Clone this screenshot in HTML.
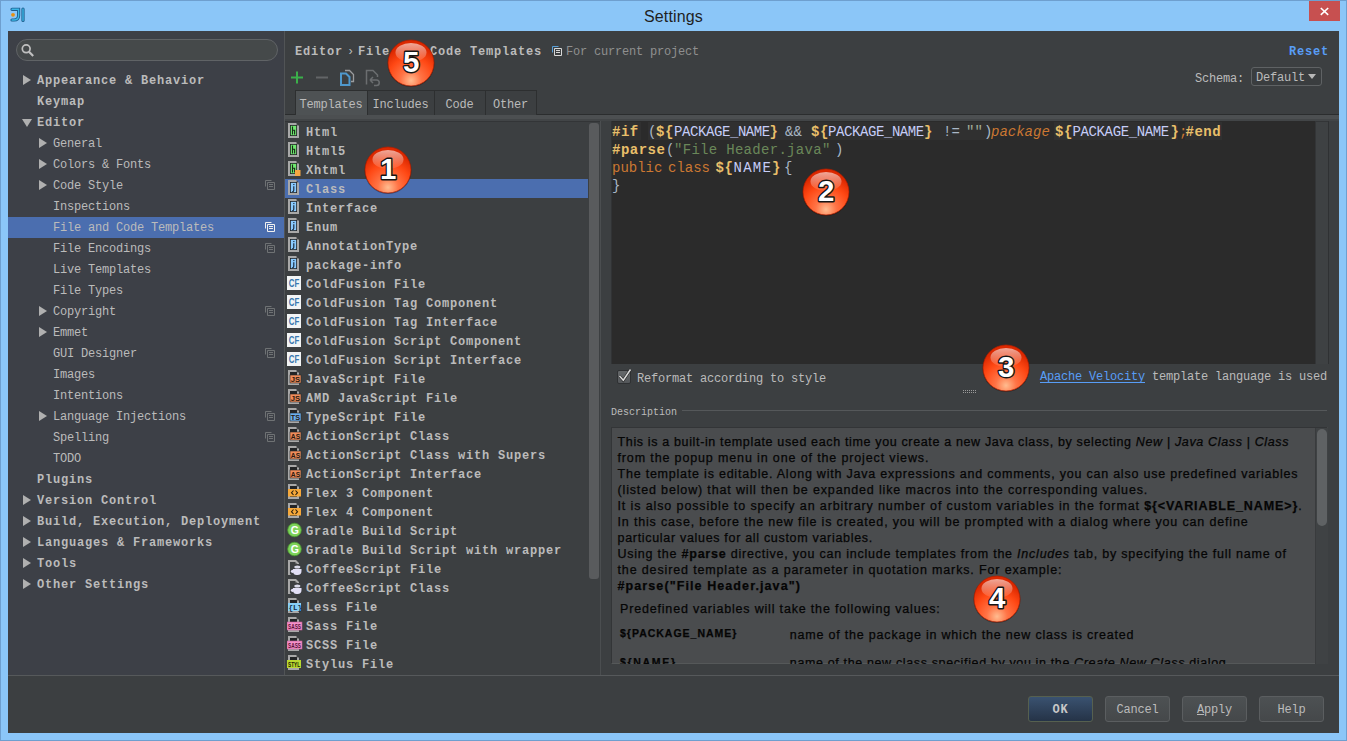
<!DOCTYPE html><html><head><meta charset="utf-8"><style>
*{margin:0;padding:0;box-sizing:border-box}
html,body{width:1347px;height:741px;overflow:hidden}
body{position:relative;background:#8bc6f8;color:#bbbbbb}
.a{position:absolute}
.mb{position:absolute;font-family:'Liberation Mono',monospace;font-weight:bold;font-size:12px;letter-spacing:0.8px;white-space:nowrap;line-height:16px}
.mr{position:absolute;font-family:'Liberation Mono',monospace;font-size:12px;letter-spacing:-0.2px;white-space:nowrap;line-height:16px}
.tri{position:absolute;width:0;height:0;border-top:5px solid transparent;border-bottom:5px solid transparent;border-left:8px solid #b0b0b0}
.trid{position:absolute;width:0;height:0;border-left:5px solid transparent;border-right:5px solid transparent;border-top:8px solid #b0b0b0}
.ds{position:absolute;font-family:'Liberation Sans',sans-serif;font-size:12.5px;line-height:16px;color:#050505;white-space:nowrap;-webkit-text-stroke:0.25px #050505}
.cd{position:absolute;font-family:'Liberation Mono',monospace;font-size:14px;line-height:18px;white-space:pre}
</style></head><body>
<div class="a" style="left:0;top:0;width:1347px;height:741px;border:1px solid #6e9fcf"></div>
<div class="a" style="left:0;top:6.5px;width:1347px;text-align:center;font-family:'Liberation Sans',sans-serif;font-size:16px;line-height:20px;color:#1f1f1f;padding-left:0px;letter-spacing:0.15px">Settings</div>
<div class="a" style="left:1309px;top:1px;width:31px;height:20px;background:#c75050"></div>
<svg class="a" style="left:1309px;top:1px" width="31" height="20"><path d="M11.8 7 L19.2 13.8 M19.2 7 L11.8 13.8" stroke="#fff" stroke-width="1.6"/></svg>
<svg class="a" style="left:8px;top:6px" width="20" height="18"><path d="M4 3.3 H10.6 V9.5 Q10.6 14 6 14 H4" fill="none" stroke="#1d5c8c" stroke-width="3.2" stroke-linecap="round"/><path d="M4 3.3 H10.6 V9.5 Q10.6 14 6 14 H4" fill="none" stroke="#3ab6e6" stroke-width="1.4" stroke-linecap="round"/><path d="M15 3 V14.5" fill="none" stroke="#1d5c8c" stroke-width="3.2" stroke-linecap="round"/><path d="M15 3 V14.5" fill="none" stroke="#3ab6e6" stroke-width="1.4" stroke-linecap="round"/><circle cx="5" cy="8.8" r="1.9" fill="#e89010"/></svg>
<div class="a" style="left:8px;top:31px;width:1331px;height:702px;background:#3c3f41"></div>
<div class="a" style="left:8px;top:31px;width:276px;height:644px;background:#3d4047"></div>
<div class="a" style="left:284px;top:31px;width:1px;height:644px;background:#515456"></div>
<div class="a" style="left:8px;top:675px;width:1331px;height:1px;background:#56595b"></div>
<div class="a" style="left:16px;top:39px;width:262px;height:22px;border-radius:11px;background:#45494a;border:1px solid #606366"></div>
<svg class="a" style="left:16px;top:39px" width="22" height="22"><circle cx="10.2" cy="9.8" r="3.9" fill="none" stroke="#c0c0c0" stroke-width="1.7"/><path d="M13 12.8 L17.2 17" stroke="#c0c0c0" stroke-width="2.2"/></svg>
<div class="mb" style="left:37px;top:73px">Appearance &amp; Behavior</div>
<div class="tri" style="left:23px;top:75px"></div>
<div class="mb" style="left:37px;top:94px">Keymap</div>
<div class="mb" style="left:37px;top:115px">Editor</div>
<div class="trid" style="left:22px;top:119px"></div>
<div class="mr" style="left:53px;top:136px">General</div>
<div class="tri" style="left:39px;top:138px"></div>
<div class="mr" style="left:53px;top:157px">Colors &amp; Fonts</div>
<div class="tri" style="left:39px;top:159px"></div>
<div class="mr" style="left:53px;top:178px">Code Style</div>
<div class="tri" style="left:39px;top:180px"></div>
<svg class="a" style="left:265px;top:180px" width="10" height="10"><path d="M0.5 6.5 V0.5 H6.5" fill="none" stroke="#6f7274" stroke-width="1"/><path d="M2.5 2.5 H9.5 V9.5 H2.5 Z" fill="none" stroke="#6f7274" stroke-width="1"/><path d="M4 4.5 H8 M4 6.5 H8" stroke="#6f7274" stroke-width="1"/></svg>
<div class="mr" style="left:53px;top:199px">Inspections</div>
<div class="a" style="left:8px;top:217px;width:276px;height:21px;background:#4b6eaf"></div>
<div class="mr" style="left:53px;top:220px">File and Code Templates</div>
<svg class="a" style="left:265px;top:222px" width="10" height="10"><path d="M0.5 6.5 V0.5 H6.5" fill="none" stroke="#f0f0f0" stroke-width="1"/><path d="M2.5 2.5 H9.5 V9.5 H2.5 Z" fill="none" stroke="#f0f0f0" stroke-width="1"/><path d="M4 4.5 H8 M4 6.5 H8" stroke="#f0f0f0" stroke-width="1"/></svg>
<div class="mr" style="left:53px;top:241px">File Encodings</div>
<svg class="a" style="left:265px;top:243px" width="10" height="10"><path d="M0.5 6.5 V0.5 H6.5" fill="none" stroke="#6f7274" stroke-width="1"/><path d="M2.5 2.5 H9.5 V9.5 H2.5 Z" fill="none" stroke="#6f7274" stroke-width="1"/><path d="M4 4.5 H8 M4 6.5 H8" stroke="#6f7274" stroke-width="1"/></svg>
<div class="mr" style="left:53px;top:262px">Live Templates</div>
<div class="mr" style="left:53px;top:283px">File Types</div>
<div class="mr" style="left:53px;top:304px">Copyright</div>
<div class="tri" style="left:39px;top:306px"></div>
<svg class="a" style="left:265px;top:306px" width="10" height="10"><path d="M0.5 6.5 V0.5 H6.5" fill="none" stroke="#6f7274" stroke-width="1"/><path d="M2.5 2.5 H9.5 V9.5 H2.5 Z" fill="none" stroke="#6f7274" stroke-width="1"/><path d="M4 4.5 H8 M4 6.5 H8" stroke="#6f7274" stroke-width="1"/></svg>
<div class="mr" style="left:53px;top:325px">Emmet</div>
<div class="tri" style="left:39px;top:327px"></div>
<div class="mr" style="left:53px;top:346px">GUI Designer</div>
<svg class="a" style="left:265px;top:348px" width="10" height="10"><path d="M0.5 6.5 V0.5 H6.5" fill="none" stroke="#6f7274" stroke-width="1"/><path d="M2.5 2.5 H9.5 V9.5 H2.5 Z" fill="none" stroke="#6f7274" stroke-width="1"/><path d="M4 4.5 H8 M4 6.5 H8" stroke="#6f7274" stroke-width="1"/></svg>
<div class="mr" style="left:53px;top:367px">Images</div>
<div class="mr" style="left:53px;top:388px">Intentions</div>
<div class="mr" style="left:53px;top:409px">Language Injections</div>
<div class="tri" style="left:39px;top:411px"></div>
<svg class="a" style="left:265px;top:411px" width="10" height="10"><path d="M0.5 6.5 V0.5 H6.5" fill="none" stroke="#6f7274" stroke-width="1"/><path d="M2.5 2.5 H9.5 V9.5 H2.5 Z" fill="none" stroke="#6f7274" stroke-width="1"/><path d="M4 4.5 H8 M4 6.5 H8" stroke="#6f7274" stroke-width="1"/></svg>
<div class="mr" style="left:53px;top:430px">Spelling</div>
<svg class="a" style="left:265px;top:432px" width="10" height="10"><path d="M0.5 6.5 V0.5 H6.5" fill="none" stroke="#6f7274" stroke-width="1"/><path d="M2.5 2.5 H9.5 V9.5 H2.5 Z" fill="none" stroke="#6f7274" stroke-width="1"/><path d="M4 4.5 H8 M4 6.5 H8" stroke="#6f7274" stroke-width="1"/></svg>
<div class="mr" style="left:53px;top:451px">TODO</div>
<div class="mb" style="left:37px;top:472px">Plugins</div>
<div class="mb" style="left:37px;top:493px">Version Control</div>
<div class="tri" style="left:23px;top:495px"></div>
<div class="mb" style="left:37px;top:514px">Build, Execution, Deployment</div>
<div class="tri" style="left:23px;top:516px"></div>
<div class="mb" style="left:37px;top:535px">Languages &amp; Frameworks</div>
<div class="tri" style="left:23px;top:537px"></div>
<div class="mb" style="left:37px;top:556px">Tools</div>
<div class="tri" style="left:23px;top:558px"></div>
<div class="mb" style="left:37px;top:577px">Other Settings</div>
<div class="tri" style="left:23px;top:579px"></div>
<div class="mb" style="left:295px;top:44px">Editor</div>
<div class="mr" style="left:347px;top:44px">›</div>
<div class="mb" style="left:358px;top:44px">File and Code Templates</div>
<svg class="a" style="left:552px;top:46px" width="10" height="10"><path d="M0.5 6.5 V0.5 H6.5" fill="none" stroke="#5aa0d8" stroke-width="1"/><path d="M2.5 2.5 H9.5 V9.5 H2.5 Z" fill="none" stroke="#d8d8d8" stroke-width="1"/><path d="M4 4.5 H8 M4 6.5 H8" stroke="#d8d8d8" stroke-width="1"/></svg>
<div class="mr" style="left:566px;top:44px;color:#8f8f8f">For current project</div>
<div class="mb" style="left:1289px;top:44px;color:#589df6">Reset</div>
<svg class="a" style="left:285px;top:66px" width="100" height="22"><path d="M12 5.5 V17.5 M6 11.5 H18" stroke="#3bb04a" stroke-width="2"/><path d="M31 11.5 H43" stroke="#626567" stroke-width="2"/><path d="M60 4.5 H64.5 L68.5 8.5 V15.5 H66" fill="none" stroke="#9a9c9e" stroke-width="1.3"/><path d="M56 7.5 H61 L64.5 11 V19 H56 Z" fill="none" stroke="#4f98cc" stroke-width="2"/><path d="M81.5 18.5 V4.5 H88 L92.5 9 V11" fill="none" stroke="#6b6e70" stroke-width="1.5"/><path d="M85 14 L88 11 M85 14 L88 17 M85.5 14 H91.5 A2.7 2.7 0 0 1 91.5 19.5 H89" fill="none" stroke="#6b6e70" stroke-width="1.5"/></svg>
<div class="mr" style="left:1195px;top:71px">Schema:</div>
<div class="a" style="left:1251px;top:67px;width:71px;height:19px;border:1px solid #5f6264;border-radius:3px;background:#3a3d3f"></div>
<div class="mr" style="left:1256px;top:70px">Default</div>
<div class="a" style="left:1308px;top:74px;width:0;height:0;border-left:4.5px solid transparent;border-right:4.5px solid transparent;border-top:5.5px solid #b8b8b8"></div>
<div class="a" style="left:285px;top:114px;width:1054px;height:1px;background:#2b2d2e"></div>
<div class="a" style="left:285px;top:115px;width:1054px;height:4px;background:#4c4f51"></div>
<div class="a" style="left:285px;top:119px;width:1054px;height:2px;background:#424547"></div>
<div class="a" style="left:295px;top:90px;width:73px;height:25px;background:#4e5254;border:1px solid #2d2f30;border-bottom:none"></div>
<div class="mr" style="left:295px;width:72px;text-align:center;top:97px">Templates</div>
<div class="a" style="left:367px;top:90px;width:68px;height:25px;background:#3c3f41;border:1px solid #2d2f30;border-bottom:none"></div>
<div class="mr" style="left:367px;width:67px;text-align:center;top:97px">Includes</div>
<div class="a" style="left:434px;top:90px;width:52px;height:25px;background:#3c3f41;border:1px solid #2d2f30;border-bottom:none"></div>
<div class="mr" style="left:434px;width:51px;text-align:center;top:97px">Code</div>
<div class="a" style="left:485px;top:90px;width:52px;height:25px;background:#3c3f41;border:1px solid #2d2f30;border-bottom:none"></div>
<div class="mr" style="left:485px;width:51px;text-align:center;top:97px">Other</div>
<div class="a" style="left:296px;top:114px;width:71px;height:1px;background:#4e5254"></div>
<div class="a" style="left:285px;top:121px;width:315px;height:554px;background:#3c3f41"></div>
<div class="a" style="left:600px;top:121px;width:1px;height:554px;background:#4b4e50"></div>
<div class="a" style="left:285px;top:121px;width:315px;height:1px;background:#333537"></div>
<div class="a" style="left:589px;top:123px;width:10px;height:456px;border-radius:3px;background:#595b5d"></div>
<svg class="a" style="left:287px;top:122px" width="17" height="18"><path d="M1 1 H9 L12 4 V16 H1 Z" fill="#a8a8a8"/><rect x="3" y="3" width="7" height="11" fill="#222426"/><rect x="9.6" y="2.2" width="1.2" height="1.2" fill="#333"/><rect x="3.8" y="3.8" width="5.4" height="9.4" fill="#6fe86f"/><path d="M5.5 4.6 V12.6 M5.5 8.3 H7.6 V12.6" fill="none" stroke="#1a2a1a" stroke-width="1.1"/></svg>
<div class="mb" style="left:306px;top:125px">Html</div>
<svg class="a" style="left:287px;top:141px" width="17" height="18"><path d="M1 1 H9 L12 4 V16 H1 Z" fill="#a8a8a8"/><rect x="3" y="3" width="7" height="11" fill="#222426"/><rect x="9.6" y="2.2" width="1.2" height="1.2" fill="#333"/><rect x="3.8" y="3.8" width="5.4" height="9.4" fill="#6fe86f"/><path d="M5.5 4.6 V12.6 M5.5 8.3 H7.6 V12.6" fill="none" stroke="#1a2a1a" stroke-width="1.1"/></svg>
<div class="mb" style="left:306px;top:144px">Html5</div>
<svg class="a" style="left:287px;top:160px" width="17" height="18"><path d="M1 1 H9 L12 4 V16 H1 Z" fill="#a8a8a8"/><rect x="3" y="3" width="7" height="11" fill="#222426"/><rect x="9.6" y="2.2" width="1.2" height="1.2" fill="#333"/><rect x="3.8" y="3.8" width="5.4" height="9.4" fill="#6fe86f"/><path d="M5.5 4.6 V12.6 M5.5 8.3 H7.6 V12.6" fill="none" stroke="#1a2a1a" stroke-width="1.1"/><rect x="8" y="10" width="5.5" height="6" fill="#f5a742"/></svg>
<div class="mb" style="left:306px;top:163px">Xhtml</div>
<div class="a" style="left:285px;top:179px;width:303px;height:19px;background:#4b6eaf"></div>
<svg class="a" style="left:287px;top:179px" width="17" height="18"><path d="M1 1 H9 L12 4 V16 H1 Z" fill="#a8a8a8"/><rect x="3" y="3" width="7" height="11" fill="#222426"/><rect x="9.6" y="2.2" width="1.2" height="1.2" fill="#333"/><rect x="3.8" y="3.8" width="5.4" height="9.4" fill="#8acbff"/><path d="M6.8 7.3 V11.3 Q6.8 12.7 5.2 12.7" fill="none" stroke="#142030" stroke-width="1.1"/><rect x="6.3" y="5" width="1.1" height="1.1" fill="#142030"/></svg>
<div class="mb" style="left:306px;top:182px">Class</div>
<svg class="a" style="left:287px;top:198px" width="17" height="18"><path d="M1 1 H9 L12 4 V16 H1 Z" fill="#a8a8a8"/><rect x="3" y="3" width="7" height="11" fill="#222426"/><rect x="9.6" y="2.2" width="1.2" height="1.2" fill="#333"/><rect x="3.8" y="3.8" width="5.4" height="9.4" fill="#8acbff"/><path d="M6.8 7.3 V11.3 Q6.8 12.7 5.2 12.7" fill="none" stroke="#142030" stroke-width="1.1"/><rect x="6.3" y="5" width="1.1" height="1.1" fill="#142030"/></svg>
<div class="mb" style="left:306px;top:201px">Interface</div>
<svg class="a" style="left:287px;top:217px" width="17" height="18"><path d="M1 1 H9 L12 4 V16 H1 Z" fill="#a8a8a8"/><rect x="3" y="3" width="7" height="11" fill="#222426"/><rect x="9.6" y="2.2" width="1.2" height="1.2" fill="#333"/><rect x="3.8" y="3.8" width="5.4" height="9.4" fill="#8acbff"/><path d="M6.8 7.3 V11.3 Q6.8 12.7 5.2 12.7" fill="none" stroke="#142030" stroke-width="1.1"/><rect x="6.3" y="5" width="1.1" height="1.1" fill="#142030"/></svg>
<div class="mb" style="left:306px;top:220px">Enum</div>
<svg class="a" style="left:287px;top:236px" width="17" height="18"><path d="M1 1 H9 L12 4 V16 H1 Z" fill="#a8a8a8"/><rect x="3" y="3" width="7" height="11" fill="#222426"/><rect x="9.6" y="2.2" width="1.2" height="1.2" fill="#333"/><rect x="3.8" y="3.8" width="5.4" height="9.4" fill="#8acbff"/><path d="M6.8 7.3 V11.3 Q6.8 12.7 5.2 12.7" fill="none" stroke="#142030" stroke-width="1.1"/><rect x="6.3" y="5" width="1.1" height="1.1" fill="#142030"/></svg>
<div class="mb" style="left:306px;top:239px">AnnotationType</div>
<svg class="a" style="left:287px;top:255px" width="17" height="18"><path d="M1 1 H9 L12 4 V16 H1 Z" fill="#a8a8a8"/><rect x="3" y="3" width="7" height="11" fill="#222426"/><rect x="9.6" y="2.2" width="1.2" height="1.2" fill="#333"/><rect x="3.8" y="3.8" width="5.4" height="9.4" fill="#8acbff"/><path d="M6.8 7.3 V11.3 Q6.8 12.7 5.2 12.7" fill="none" stroke="#142030" stroke-width="1.1"/><rect x="6.3" y="5" width="1.1" height="1.1" fill="#142030"/></svg>
<div class="mb" style="left:306px;top:258px">package-info</div>
<svg class="a" style="left:287px;top:274px" width="17" height="18"><rect x="0" y="2" width="14" height="14" fill="#f2f4f5"/><text x="1.8" y="13" font-family="Liberation Sans" font-weight="bold" font-size="10.5" textLength="10.5" lengthAdjust="spacingAndGlyphs" fill="#3a78b0">CF</text></svg>
<div class="mb" style="left:306px;top:277px">ColdFusion File</div>
<svg class="a" style="left:287px;top:293px" width="17" height="18"><rect x="0" y="2" width="14" height="14" fill="#f2f4f5"/><text x="1.8" y="13" font-family="Liberation Sans" font-weight="bold" font-size="10.5" textLength="10.5" lengthAdjust="spacingAndGlyphs" fill="#3a78b0">CF</text></svg>
<div class="mb" style="left:306px;top:296px">ColdFusion Tag Component</div>
<svg class="a" style="left:287px;top:312px" width="17" height="18"><rect x="0" y="2" width="14" height="14" fill="#f2f4f5"/><text x="1.8" y="13" font-family="Liberation Sans" font-weight="bold" font-size="10.5" textLength="10.5" lengthAdjust="spacingAndGlyphs" fill="#3a78b0">CF</text></svg>
<div class="mb" style="left:306px;top:315px">ColdFusion Tag Interface</div>
<svg class="a" style="left:287px;top:331px" width="17" height="18"><rect x="0" y="2" width="14" height="14" fill="#f2f4f5"/><text x="1.8" y="13" font-family="Liberation Sans" font-weight="bold" font-size="10.5" textLength="10.5" lengthAdjust="spacingAndGlyphs" fill="#3a78b0">CF</text></svg>
<div class="mb" style="left:306px;top:334px">ColdFusion Script Component</div>
<svg class="a" style="left:287px;top:350px" width="17" height="18"><rect x="0" y="2" width="14" height="14" fill="#f2f4f5"/><text x="1.8" y="13" font-family="Liberation Sans" font-weight="bold" font-size="10.5" textLength="10.5" lengthAdjust="spacingAndGlyphs" fill="#3a78b0">CF</text></svg>
<div class="mb" style="left:306px;top:353px">ColdFusion Script Interface</div>
<svg class="a" style="left:287px;top:369px" width="17" height="18"><path d="M1 1 H9 L12 4 V16 H1 Z" fill="#a8a8a8"/><rect x="3" y="3" width="7" height="11" fill="#222426"/><rect x="9.6" y="2.2" width="1.2" height="1.2" fill="#333"/><rect x="3" y="6" width="11" height="8" fill="#f08c5a" stroke="#2a2a2a" stroke-width="0.6"/><text x="3.8" y="12.9" font-family="Liberation Sans" font-weight="bold" font-size="7.6" textLength="9.4" lengthAdjust="spacingAndGlyphs" fill="#2a1a10">JS</text></svg>
<div class="mb" style="left:306px;top:372px">JavaScript File</div>
<svg class="a" style="left:287px;top:388px" width="17" height="18"><path d="M1 1 H9 L12 4 V16 H1 Z" fill="#a8a8a8"/><rect x="3" y="3" width="7" height="11" fill="#222426"/><rect x="9.6" y="2.2" width="1.2" height="1.2" fill="#333"/><rect x="3" y="6" width="11" height="8" fill="#f08c5a" stroke="#2a2a2a" stroke-width="0.6"/><text x="3.8" y="12.9" font-family="Liberation Sans" font-weight="bold" font-size="7.6" textLength="9.4" lengthAdjust="spacingAndGlyphs" fill="#2a1a10">JS</text></svg>
<div class="mb" style="left:306px;top:391px">AMD JavaScript File</div>
<svg class="a" style="left:287px;top:407px" width="17" height="18"><path d="M1 1 H9 L12 4 V16 H1 Z" fill="#a8a8a8"/><rect x="3" y="3" width="7" height="11" fill="#222426"/><rect x="9.6" y="2.2" width="1.2" height="1.2" fill="#333"/><rect x="3" y="6" width="11" height="8" fill="#6ab0f0" stroke="#2a2a2a" stroke-width="0.6"/><text x="3.8" y="12.9" font-family="Liberation Sans" font-weight="bold" font-size="7.6" textLength="9.4" lengthAdjust="spacingAndGlyphs" fill="#2a1a10">TS</text></svg>
<div class="mb" style="left:306px;top:410px">TypeScript File</div>
<svg class="a" style="left:287px;top:426px" width="17" height="18"><path d="M1 1 H9 L12 4 V16 H1 Z" fill="#a8a8a8"/><rect x="3" y="3" width="7" height="11" fill="#222426"/><rect x="9.6" y="2.2" width="1.2" height="1.2" fill="#333"/><rect x="3" y="6" width="11" height="8" fill="#f08c5a" stroke="#2a2a2a" stroke-width="0.6"/><text x="3.8" y="12.9" font-family="Liberation Sans" font-weight="bold" font-size="7.6" textLength="9.4" lengthAdjust="spacingAndGlyphs" fill="#2a1a10">AS</text></svg>
<div class="mb" style="left:306px;top:429px">ActionScript Class</div>
<svg class="a" style="left:287px;top:445px" width="17" height="18"><path d="M1 1 H9 L12 4 V16 H1 Z" fill="#a8a8a8"/><rect x="3" y="3" width="7" height="11" fill="#222426"/><rect x="9.6" y="2.2" width="1.2" height="1.2" fill="#333"/><rect x="3" y="6" width="11" height="8" fill="#f08c5a" stroke="#2a2a2a" stroke-width="0.6"/><text x="3.8" y="12.9" font-family="Liberation Sans" font-weight="bold" font-size="7.6" textLength="9.4" lengthAdjust="spacingAndGlyphs" fill="#2a1a10">AS</text></svg>
<div class="mb" style="left:306px;top:448px">ActionScript Class with Supers</div>
<svg class="a" style="left:287px;top:464px" width="17" height="18"><path d="M1 1 H9 L12 4 V16 H1 Z" fill="#a8a8a8"/><rect x="3" y="3" width="7" height="11" fill="#222426"/><rect x="9.6" y="2.2" width="1.2" height="1.2" fill="#333"/><rect x="3" y="6" width="11" height="8" fill="#f08c5a" stroke="#2a2a2a" stroke-width="0.6"/><text x="3.8" y="12.9" font-family="Liberation Sans" font-weight="bold" font-size="7.6" textLength="9.4" lengthAdjust="spacingAndGlyphs" fill="#2a1a10">AS</text></svg>
<div class="mb" style="left:306px;top:467px">ActionScript Interface</div>
<svg class="a" style="left:287px;top:483px" width="17" height="18"><path d="M1 1 H9 L12 4 V16 H1 Z" fill="#a8a8a8"/><rect x="3" y="3" width="7" height="11" fill="#222426"/><rect x="9.6" y="2.2" width="1.2" height="1.2" fill="#333"/><rect x="1" y="6" width="13" height="7.5" fill="#f6a83a"/><path d="M6.5 7.5 L4.5 9.7 L6.5 12 M8.5 7.5 L10.5 9.7 L8.5 12" fill="none" stroke="#2a2010" stroke-width="1.1"/></svg>
<div class="mb" style="left:306px;top:486px">Flex 3 Component</div>
<svg class="a" style="left:287px;top:502px" width="17" height="18"><path d="M1 1 H9 L12 4 V16 H1 Z" fill="#a8a8a8"/><rect x="3" y="3" width="7" height="11" fill="#222426"/><rect x="9.6" y="2.2" width="1.2" height="1.2" fill="#333"/><rect x="1" y="6" width="13" height="7.5" fill="#f6a83a"/><path d="M6.5 7.5 L4.5 9.7 L6.5 12 M8.5 7.5 L10.5 9.7 L8.5 12" fill="none" stroke="#2a2010" stroke-width="1.1"/></svg>
<div class="mb" style="left:306px;top:505px">Flex 4 Component</div>
<svg class="a" style="left:287px;top:521px" width="17" height="18"><circle cx="7.5" cy="9" r="6.8" fill="#7ed35a" stroke="#4a9a30" stroke-width="0.8"/><text x="3.7" y="13" font-family="Liberation Sans" font-weight="bold" font-size="10.5" fill="#ffffff">G</text></svg>
<div class="mb" style="left:306px;top:524px">Gradle Build Script</div>
<svg class="a" style="left:287px;top:540px" width="17" height="18"><circle cx="7.5" cy="9" r="6.8" fill="#7ed35a" stroke="#4a9a30" stroke-width="0.8"/><text x="3.7" y="13" font-family="Liberation Sans" font-weight="bold" font-size="10.5" fill="#ffffff">G</text></svg>
<div class="mb" style="left:306px;top:543px">Gradle Build Script with wrapper</div>
<svg class="a" style="left:287px;top:559px" width="17" height="18"><path d="M1 1 H9 L12 4 V5 H10 V4.5 H8.5 V3 H3 V15 H1 Z" fill="#a8a8a8"/><path d="M3 15 H1 V16 H4 Z" fill="#a8a8a8"/><path d="M6 10 H14.5 V12 Q14.5 16 10.5 16 H9.5 Q6 16 6 12 Z" fill="#e2e0f6"/><circle cx="5.5" cy="12.3" r="1.6" fill="#e2e0f6"/><ellipse cx="10.3" cy="8" rx="3" ry="1.5" fill="#d8d8e8"/></svg>
<div class="mb" style="left:306px;top:562px">CoffeeScript File</div>
<svg class="a" style="left:287px;top:578px" width="17" height="18"><path d="M1 1 H9 L12 4 V5 H10 V4.5 H8.5 V3 H3 V15 H1 Z" fill="#a8a8a8"/><path d="M3 15 H1 V16 H4 Z" fill="#a8a8a8"/><path d="M6 10 H14.5 V12 Q14.5 16 10.5 16 H9.5 Q6 16 6 12 Z" fill="#e2e0f6"/><circle cx="5.5" cy="12.3" r="1.6" fill="#e2e0f6"/><ellipse cx="10.3" cy="8" rx="3" ry="1.5" fill="#d8d8e8"/></svg>
<div class="mb" style="left:306px;top:581px">CoffeeScript Class</div>
<svg class="a" style="left:287px;top:597px" width="17" height="18"><path d="M1 1 H9 L12 4 V16 H1 Z" fill="#a8a8a8"/><rect x="3" y="3" width="7" height="11" fill="#222426"/><rect x="9.6" y="2.2" width="1.2" height="1.2" fill="#333"/><rect x="1" y="6" width="13" height="8" fill="#88d0f8"/><text x="1.6" y="12.8" font-family="Liberation Mono" font-weight="bold" font-size="7.5" fill="#14304a">{L}</text></svg>
<div class="mb" style="left:306px;top:600px">Less File</div>
<svg class="a" style="left:287px;top:616px" width="17" height="18"><path d="M1 1 H9 L12 4 V16 H1 Z" fill="#a8a8a8"/><rect x="3" y="3" width="7" height="11" fill="#222426"/><rect x="9.6" y="2.2" width="1.2" height="1.2" fill="#333"/><rect x="0" y="6" width="15" height="8" fill="#f490c8" stroke="#c05a98" stroke-width="0.6"/><text x="1" y="12.6" font-family="Liberation Sans" font-weight="bold" font-size="6.8" textLength="13" lengthAdjust="spacingAndGlyphs" fill="#5a1038">SASS</text></svg>
<div class="mb" style="left:306px;top:619px">Sass File</div>
<svg class="a" style="left:287px;top:635px" width="17" height="18"><path d="M1 1 H9 L12 4 V16 H1 Z" fill="#a8a8a8"/><rect x="3" y="3" width="7" height="11" fill="#222426"/><rect x="9.6" y="2.2" width="1.2" height="1.2" fill="#333"/><rect x="0" y="6" width="15" height="8" fill="#f490c8" stroke="#c05a98" stroke-width="0.6"/><text x="1" y="12.6" font-family="Liberation Sans" font-weight="bold" font-size="6.8" textLength="13" lengthAdjust="spacingAndGlyphs" fill="#5a1038">SASS</text></svg>
<div class="mb" style="left:306px;top:638px">SCSS File</div>
<svg class="a" style="left:287px;top:654px" width="17" height="18"><path d="M1 1 H9 L12 4 V16 H1 Z" fill="#a8a8a8"/><rect x="3" y="3" width="7" height="11" fill="#222426"/><rect x="9.6" y="2.2" width="1.2" height="1.2" fill="#333"/><rect x="0" y="6" width="14" height="8" fill="#b8d830"/><text x="1" y="12.6" font-family="Liberation Sans" font-weight="bold" font-size="6.8" textLength="12" lengthAdjust="spacingAndGlyphs" fill="#1a2400">STYL</text></svg>
<div class="mb" style="left:306px;top:657px">Stylus File</div>
<div class="a" style="left:611px;top:121px;width:704px;height:243px;background:#2b2b2b"></div>
<div class="a" style="left:611px;top:121px;width:1px;height:243px;background:#313335"></div>
<div class="a" style="left:1315px;top:121px;width:14px;height:243px;background:#3e4143;border-right:1px solid #2f3133;border-left:1px solid #333537;border-top:1px solid #333537"></div>
<div class="a" style="left:612px;top:122px;width:29px;height:18px;background:#303030"></div>
<div class="a" style="left:648px;top:122px;width:342px;height:18px;background:#303030"></div>
<div class="a" style="left:1054px;top:122px;width:124px;height:18px;background:#303030"></div>
<div class="a" style="left:1185px;top:122px;width:37px;height:18px;background:#303030"></div>
<div class="cd" style="left:612px;top:123.3px;color:#e8bf6a;font-weight:bold;letter-spacing:0.5px;">#if</div>
<div class="cd" style="left:648px;top:123.3px;color:#a9b7c6;">(</div>
<div class="cd" style="left:656px;top:123.3px;color:#e8bf6a;font-weight:bold;letter-spacing:0.5px;">${</div>
<div class="cd" style="left:674px;top:123.3px;color:#c6cdf8;letter-spacing:-0.417px;">PACKAGE_NAME</div>
<div class="cd" style="left:769.5px;top:123.3px;color:#e8bf6a;font-weight:bold;letter-spacing:0.5px;">}</div>
<div class="cd" style="left:785px;top:123.3px;color:#a9b7c6;">&amp;&amp;</div>
<div class="cd" style="left:811px;top:123.3px;color:#e8bf6a;font-weight:bold;letter-spacing:0.5px;">${</div>
<div class="cd" style="left:828px;top:123.3px;color:#c6cdf8;letter-spacing:-0.417px;">PACKAGE_NAME</div>
<div class="cd" style="left:924px;top:123.3px;color:#e8bf6a;font-weight:bold;letter-spacing:0.5px;">}</div>
<div class="cd" style="left:943px;top:123.3px;color:#a9b7c6;">!=</div>
<div class="cd" style="left:966px;top:123.3px;color:#a0ab98;">&quot;&quot;</div>
<div class="cd" style="left:984px;top:123.3px;color:#a9b7c6;">)</div>
<div class="cd" style="left:991px;top:123.3px;color:#cc7832;font-style:italic;">package</div>
<div class="cd" style="left:1055px;top:123.3px;color:#e8bf6a;font-weight:bold;letter-spacing:0.5px;">${</div>
<div class="cd" style="left:1072.5px;top:123.3px;color:#c6cdf8;letter-spacing:-0.374px;">PACKAGE_NAME</div>
<div class="cd" style="left:1170.5px;top:123.3px;color:#e8bf6a;font-weight:bold;letter-spacing:0.5px;">}</div>
<div class="cd" style="left:1179px;top:123.3px;color:#cc7832;">;</div>
<div class="cd" style="left:1185.5px;top:123.3px;color:#e8bf6a;font-weight:bold;letter-spacing:0.5px;">#end</div>
<div class="cd" style="left:612px;top:141.3px;color:#e8bf6a;font-weight:bold;letter-spacing:0.5px;">#parse</div>
<div class="cd" style="left:666px;top:141.3px;color:#a9b7c6;">(</div>
<div class="cd" style="left:674px;top:141.3px;color:#6a8759;letter-spacing:0.3px;">&quot;File Header.java&quot;</div>
<div class="cd" style="left:835px;top:141.3px;color:#a9b7c6;">)</div>
<div class="cd" style="left:612px;top:159.3px;color:#cc7832;">public</div>
<div class="cd" style="left:668px;top:159.3px;color:#cc7832;">class</div>
<div class="cd" style="left:715.5px;top:159.3px;color:#e8bf6a;font-weight:bold;letter-spacing:0.5px;">${</div>
<div class="cd" style="left:733.5px;top:159.3px;color:#c6cdf8;letter-spacing:1.257px;">NAME</div>
<div class="cd" style="left:772px;top:159.3px;color:#e8bf6a;font-weight:bold;letter-spacing:0.5px;">}</div>
<div class="cd" style="left:784px;top:159.3px;color:#a9b7c6;">{</div>
<div class="cd" style="left:612px;top:177.3px;color:#a9b7c6;">}</div>
<div class="a" style="left:617px;top:370px;width:14px;height:14px;border:1px solid #2f3133;border-radius:2px;background:linear-gradient(#65686a,#54575a)"></div>
<svg class="a" style="left:614px;top:365px" width="20" height="20"><path d="M5.5 11 L9.3 15.3 L16.5 4.5" fill="none" stroke="#1c1c1c" stroke-width="2.6"/><path d="M5.5 11 L9.3 15.3 L16.5 4.5" fill="none" stroke="#d8d8d8" stroke-width="1.6"/></svg>
<div class="mr" style="left:637px;top:371px">Reformat according to style</div>
<div class="mr" style="left:1040px;top:369px;color:#589df6">Apache Velocity</div>
<div class="a" style="left:1040px;top:382px;width:105px;height:1px;background:#589df6"></div>
<div class="mr" style="left:1152px;top:369px">template language is used</div>
<svg class="a" style="left:962px;top:389px" width="15" height="5"><g fill="#9a9a9a"><rect x="1" y="1" width="1" height="1"/><rect x="1" y="3" width="1" height="1"/><rect x="3" y="1" width="1" height="1"/><rect x="3" y="3" width="1" height="1"/><rect x="5" y="1" width="1" height="1"/><rect x="5" y="3" width="1" height="1"/><rect x="7" y="1" width="1" height="1"/><rect x="7" y="3" width="1" height="1"/><rect x="9" y="1" width="1" height="1"/><rect x="9" y="3" width="1" height="1"/><rect x="11" y="1" width="1" height="1"/><rect x="11" y="3" width="1" height="1"/><rect x="13" y="1" width="1" height="1"/><rect x="13" y="3" width="1" height="1"/></g></svg>
<div class="a" style="left:611px;top:406px;font-family:'Liberation Mono',monospace;font-size:10px;line-height:14px;white-space:nowrap;color:#bbbbbb">Description</div>
<div class="a" style="left:682px;top:410px;width:645px;height:1px;background:#55585a"></div>
<div class="a" style="left:611px;top:427px;width:717px;height:237px;background:#4a4c4e;border-top:1px solid #333537;border-left:1px solid #333537;border-right:1px solid #555859;border-bottom:1px solid #555859"></div>
<div class="a" style="left:1315px;top:428px;width:13px;height:236px;background:#3f4244;border-left:1px solid #393b3d"></div>
<div class="a" style="left:1317px;top:429px;width:10px;height:97px;border-radius:5px;background:#5f6264"></div>
<div class="a" style="left:612px;top:428px;width:703px;height:236px;overflow:hidden">
<div id="d0" class="ds" data-r="1288.5" data-l="617.5" style="left:5.5px;top:6.27px;letter-spacing:0.646px;">This is a built-in template used each time you create a new Java class, by selecting <i>New</i> | <i>Java Class</i> | <i>Class</i></div>
<div id="d1" class="ds" data-r="928.4" data-l="617.5" style="left:5.5px;top:22.27px;letter-spacing:0.864px;">from the popup menu in one of the project views.</div>
<div id="d2" class="ds" data-r="1297.6" data-l="617.5" style="left:5.5px;top:38.27px;letter-spacing:0.780px;">The template is editable. Along with Java expressions and comments, you can also use predefined variables</div>
<div id="d3" class="ds" data-r="1147.3" data-l="617.5" style="left:5.5px;top:54.27px;letter-spacing:0.849px;">(listed below) that will then be expanded like macros into the corresponding values.</div>
<div id="d4" class="ds" data-r="1301.6" data-l="617.5" style="left:5.5px;top:70.27px;letter-spacing:0.884px;">It is also possible to specify an arbitrary number of custom variables in the format <b>${&lt;VARIABLE_NAME&gt;}</b>.</div>
<div id="d5" class="ds" data-r="1247.6" data-l="617.5" style="left:5.5px;top:86.27px;letter-spacing:0.833px;">In this case, before the new file is created, you will be prompted with a dialog where you can define</div>
<div id="d6" class="ds" data-r="872.2" data-l="617.5" style="left:5.5px;top:102.27px;letter-spacing:0.688px;">particular values for all custom variables.</div>
<div id="d7" class="ds" data-r="1285.9" data-l="617.5" style="left:5.5px;top:118.27px;letter-spacing:0.773px;">Using the <b>#parse</b> directive, you can include templates from the <i>Includes</i> tab, by specifying the full name of</div>
<div id="d8" class="ds" data-r="1061.4" data-l="617.5" style="left:5.5px;top:134.27px;letter-spacing:0.860px;">the desired template as a parameter in quotation marks. For example:</div>
<div id="d9" class="ds" data-r="799.9" data-l="617.5" style="left:5.5px;top:150.27px;letter-spacing:1.096px;"><b>#parse("File Header.java")</b></div>
<div id="d10" class="ds" data-r="939.8" data-l="620" style="left:8px;top:172.67px;letter-spacing:0.821px;">Predefined variables will take the following values:</div>
<div id="d11" class="ds" data-r="736.4" data-l="620" style="left:8px;top:197.23px;letter-spacing:0.993px;font-weight:bold;font-size:10.5px;">${PACKAGE_NAME}</div>
<div id="d12" class="ds" data-r="1133.5" data-l="789.8" style="left:177.79999999999995px;top:199.27px;letter-spacing:0.797px;">name of the package in which the new class is created</div>
<div id="d13" class="ds" data-r="675" data-l="620" style="left:8px;top:225.83px;letter-spacing:1.677px;font-weight:bold;font-size:10.5px;">${NAME}</div>
<div id="d14" class="ds" data-r="1225.7" data-l="789.8" style="left:177.79999999999995px;top:226.87px;letter-spacing:0.637px;">name of the new class specified by you in the <i>Create New Class</i> dialog</div>
</div>
<div class="a" style="left:1028px;top:696px;width:65px;height:26px;border-radius:3px;border:1px solid #56604f;background:linear-gradient(#3a5270,#253347)"></div>
<div class="mb" style="left:1028px;width:65px;text-align:center;top:702px;color:#c8c8c8">OK</div>
<div class="a" style="left:1105px;top:696px;width:65px;height:26px;border-radius:3px;border:1px solid #5b5e60;background:linear-gradient(#4d5153,#45484a)"></div>
<div class="mr" style="left:1105px;width:65px;text-align:center;top:702px">Cancel</div>
<div class="a" style="left:1182px;top:696px;width:65px;height:26px;border-radius:3px;border:1px solid #5b5e60;background:linear-gradient(#4d5153,#45484a)"></div>
<div class="mr" style="left:1182px;width:65px;text-align:center;top:702px"><u>A</u>pply</div>
<div class="a" style="left:1259px;top:696px;width:65px;height:26px;border-radius:3px;border:1px solid #5b5e60;background:linear-gradient(#4d5153,#45484a)"></div>
<div class="mr" style="left:1259px;width:65px;text-align:center;top:702px">Help</div>
<svg width="0" height="0" style="position:absolute"><defs><radialGradient id="bgr" cx="50%" cy="88%" r="75%"><stop offset="0" stop-color="#ffbc90"/><stop offset="0.3" stop-color="#ff7446"/><stop offset="0.68" stop-color="#ff4814"/><stop offset="1" stop-color="#dc2800"/></radialGradient><linearGradient id="hlg" x1="0" y1="0" x2="0" y2="1"><stop offset="0" stop-color="#fff" stop-opacity="0.6"/><stop offset="1" stop-color="#fff" stop-opacity="0.08"/></linearGradient></defs></svg>
<svg class="a" style="left:363.2px;top:144.5px" width="50" height="50"><circle cx="25" cy="25.5" r="23.5" fill="#000" fill-opacity="0.35"/><circle cx="25" cy="25" r="23" fill="url(#bgr)" stroke="#b82000" stroke-width="0.7"/><ellipse cx="25" cy="14.5" rx="15.5" ry="9.5" fill="url(#hlg)"/><text x="25.3" y="34.2" text-anchor="middle" font-family="Liberation Sans" font-weight="bold" font-size="29.5" fill="#fff" stroke="#151515" stroke-width="2.8" stroke-linejoin="round" paint-order="stroke">1</text></svg>
<svg class="a" style="left:801.0px;top:167.0px" width="50" height="50"><circle cx="25" cy="25.5" r="23.5" fill="#000" fill-opacity="0.35"/><circle cx="25" cy="25" r="23" fill="url(#bgr)" stroke="#b82000" stroke-width="0.7"/><ellipse cx="25" cy="14.5" rx="15.5" ry="9.5" fill="url(#hlg)"/><text x="25.3" y="34.2" text-anchor="middle" font-family="Liberation Sans" font-weight="bold" font-size="29.5" fill="#fff" stroke="#151515" stroke-width="2.8" stroke-linejoin="round" paint-order="stroke">2</text></svg>
<svg class="a" style="left:981.0px;top:343.0px" width="50" height="50"><circle cx="25" cy="25.5" r="23.5" fill="#000" fill-opacity="0.35"/><circle cx="25" cy="25" r="23" fill="url(#bgr)" stroke="#b82000" stroke-width="0.7"/><ellipse cx="25" cy="14.5" rx="15.5" ry="9.5" fill="url(#hlg)"/><text x="25.3" y="34.2" text-anchor="middle" font-family="Liberation Sans" font-weight="bold" font-size="29.5" fill="#fff" stroke="#151515" stroke-width="2.8" stroke-linejoin="round" paint-order="stroke">3</text></svg>
<svg class="a" style="left:972.4px;top:574.0px" width="50" height="50"><circle cx="25" cy="25.5" r="23.5" fill="#000" fill-opacity="0.35"/><circle cx="25" cy="25" r="23" fill="url(#bgr)" stroke="#b82000" stroke-width="0.7"/><ellipse cx="25" cy="14.5" rx="15.5" ry="9.5" fill="url(#hlg)"/><text x="25.3" y="34.2" text-anchor="middle" font-family="Liberation Sans" font-weight="bold" font-size="29.5" fill="#fff" stroke="#151515" stroke-width="2.8" stroke-linejoin="round" paint-order="stroke">4</text></svg>
<svg class="a" style="left:385.8px;top:38.4px" width="50" height="50"><circle cx="25" cy="25.5" r="23.5" fill="#000" fill-opacity="0.35"/><circle cx="25" cy="25" r="23" fill="url(#bgr)" stroke="#b82000" stroke-width="0.7"/><ellipse cx="25" cy="14.5" rx="15.5" ry="9.5" fill="url(#hlg)"/><text x="25.3" y="34.2" text-anchor="middle" font-family="Liberation Sans" font-weight="bold" font-size="29.5" fill="#fff" stroke="#151515" stroke-width="2.8" stroke-linejoin="round" paint-order="stroke">5</text></svg>
</body></html>
